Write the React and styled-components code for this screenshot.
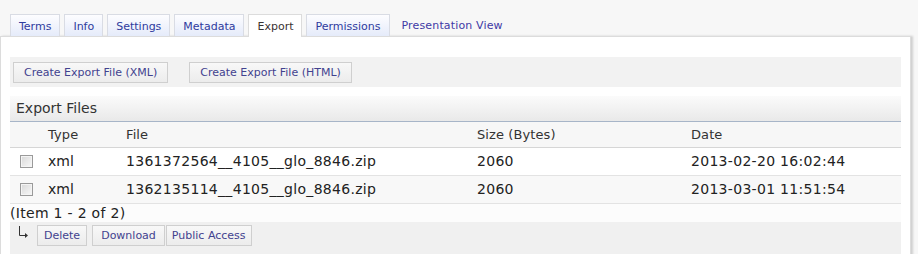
import React from 'react'
import styled, { createGlobalStyle, css } from 'styled-components'

const GlobalStyle = createGlobalStyle`
	body {
		margin: 0;
		background-color: #f7f7f7;
		font-family: "DejaVu Sans", Verdana, sans-serif;
		color: #222;
	}
`

const Page = styled.div`
	padding-top: 14px;
	width: 911px;
`

const TabBar = styled.div`
	display: flex;
	align-items: flex-end;
	gap: 4px;
	padding-left: 10px;
	height: 22px;
`

const Tab = styled.div`
	box-sizing: border-box;
	height: 22px;
	padding: 0 8px;
	font-size: 11px;
	line-height: 23px;
	color: #2f3b9e;
	border: 1px solid #d9dce4;
	border-bottom: none;
	background: linear-gradient(#fdfdff, #e5ebfa);
	${props => props.$active && css`
		position: relative;
		z-index: 1;
		height: 23px;
		margin-bottom: -1px;
		color: #3a3333;
		background: #fff;
		border-color: #dcdcdc;
	`}
	${props => props.$plain && css`
		border: none;
		background: transparent;
		padding: 0 8px;
		color: #3f3aa6;
		letter-spacing: 0.15px;
	`}
`

const Panel = styled.div`
	box-sizing: border-box;
	background-color: #fff;
	border: 1px solid #dcdcdc;
	box-shadow: 2px 0 2px #cfcfcf;
	padding: 20px 9px 10px 9px;
	height: 240px;
`

const Toolbar = styled.div`
	display: flex;
	align-items: center;
	gap: 21px;
	height: 30px;
	padding: 0 3px;
	background-color: #f2f2f2;
`

const Button = styled.button`
	box-sizing: border-box;
	height: 21px;
	padding: 0 ${props => props.$pad || 6}px;
	margin-left: ${props => props.$offset || 0}px;
	font-family: "DejaVu Sans", Verdana, sans-serif;
	font-size: 11px;
	color: #42428f;
	background: linear-gradient(#f8f8f8, #ececec);
	border: 1px solid #cfcfcf;
	border-radius: 0;
	cursor: pointer;
`

const SectionHeader = styled.div`
	margin-top: 9px;
	height: 25px;
	padding-left: 6px;
	font-size: 14px;
	line-height: 25px;
	color: #333;
	background: linear-gradient(#fbfbfb, #e9e9e9);
	border-bottom: 1px solid #a7b5c8;
`

const Table = styled.table`
	width: 100%;
	border-collapse: collapse;
	font-size: 13px;
	table-layout: fixed;
`

const HeadRow = styled.tr`
	height: 25px;
	background-color: #f7f7f7;
	border-bottom: 1px solid #d6d6d6;
`

const Row = styled.tr`
	height: 28px;
	background-color: ${props => props.$alt ? '#f8f8f8' : '#fff'};
	border-bottom: 1px solid #e3e3e3;
`

const Th = styled.th`
	width: ${props => props.$w}px;
	padding: 0;
	text-align: left;
	font-weight: normal;
	color: #333;
	letter-spacing: 0.1px;
`

const Td = styled.td`
	padding: 0;
	font-size: 14px;
	color: #222;
	white-space: nowrap;
	letter-spacing: ${props => props.$num ? '0.3px' : '0'};
	${props => props.$check && css`
		padding-left: 10px;
	`}
`

const Check = styled.input.attrs({ type: 'checkbox' })`
	appearance: none;
	display: block;
	box-sizing: border-box;
	width: 13px;
	height: 13px;
	margin: 1px 0 0 0;
	border: 1px solid #9a9a9a;
	background: linear-gradient(135deg, #d8d8d8, #f8f8f8);
	box-shadow: inset 0 0 0 1px #f4f4f4;
`

const Pager = styled.div`
	height: 18px;
	font-size: 14px;
	line-height: 18px;
	letter-spacing: 0.3px;
	color: #222;
	background-color: #fcfcfc;
`

const ActionBar = styled.div`
	display: flex;
	align-items: flex-start;
	height: 40px;
	padding-top: 3px;
	background-color: #f0f0f0;
`

const Corner = styled.div`
	width: 27px;
	height: 21px;
	display: flex;
	justify-content: center;
	padding-top: 1px;
`

const files = [
	{ type: 'xml', file: '1361372564__4105__glo_8846.zip', size: '2060', date: '2013-02-20 16:02:44' },
	{ type: 'xml', file: '1362135114__4105__glo_8846.zip', size: '2060', date: '2013-03-01 11:51:54' },
]

const tabs = ['Terms', 'Info', 'Settings', 'Metadata', 'Export', 'Permissions']

const App = () => {
	return (
		<Page>
			<GlobalStyle />
			<TabBar>
				{tabs.map(t => (
					<Tab key = {t} $active = {t === 'Export'}>{t}</Tab>
				))}
				<Tab $plain>Presentation View</Tab>
			</TabBar>
			<Panel>
				<Toolbar>
					<Button $pad = {10}>Create Export File (XML)</Button>
					<Button $pad = {10}>Create Export File (HTML)</Button>
				</Toolbar>
				<SectionHeader>Export Files</SectionHeader>
				<Table>
					<thead>
						<HeadRow>
							<Th $w = {38}></Th>
							<Th $w = {78}>Type</Th>
							<Th $w = {351}>File</Th>
							<Th $w = {214}>Size (Bytes)</Th>
							<Th>Date</Th>
						</HeadRow>
					</thead>
					<tbody>
						{files.map((f, i) => (
							<Row key = {f.file} $alt = {i % 2 === 1}>
								<Td $check><Check /></Td>
								<Td>{f.type}</Td>
								<Td $num>{f.file}</Td>
								<Td $num>{f.size}</Td>
								<Td $num>{f.date}</Td>
							</Row>
						))}
					</tbody>
				</Table>
				<Pager>(Item 1 - 2 of 2)</Pager>
				<ActionBar>
					<Corner>
						<svg width = "13" height = "13" viewBox = "0 0 13 13">
							<path d = "M2.5 0 V9.5 H8" stroke = "#333" strokeWidth = "1" fill = "none" />
							<path d = "M8 7 L11 9.5 L8 12 Z" fill = "#333" />
						</svg>
					</Corner>
					<Button>Delete</Button>
					<Button $pad = {8} $offset = {5}>Download</Button>
					<Button $pad = {5} $offset = {1}>Public Access</Button>
				</ActionBar>
			</Panel>
		</Page>
	)
}

export default App
